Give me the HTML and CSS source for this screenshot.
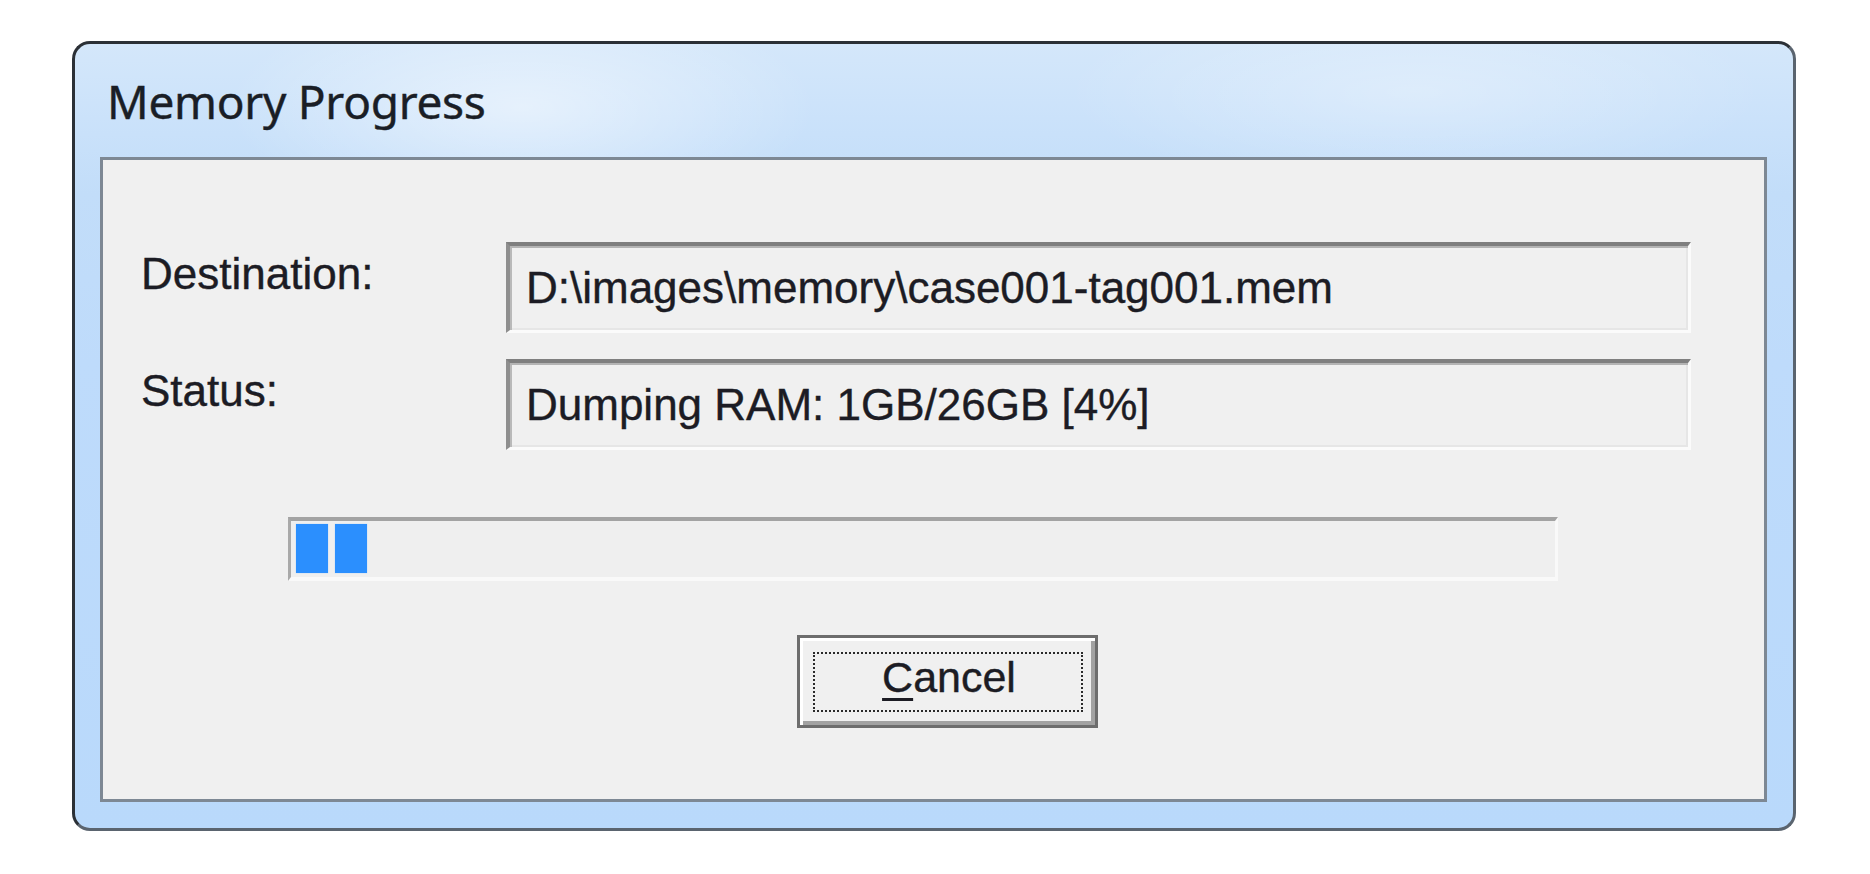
FILE: index.html
```html
<!DOCTYPE html>
<html lang="en">
<head>
<meta charset="utf-8">
<title>Memory Progress</title>
<link rel="stylesheet" href="styles.css">
</head>
<body>
<div class="window">
  <div class="titlebar"><span class="title">Memory Progress</span></div>
  <div class="panel">
    <div class="rows">
      <div class="row">
        <span class="label">Destination:</span>
        <div class="field">D:\images\memory\case001-tag001.mem</div>
      </div>
      <div class="row">
        <span class="label">Status:</span>
        <div class="field">Dumping RAM: 1GB/26GB [4%]</div>
      </div>
    </div>
    <div class="progress"><span class="chunk"></span><span class="chunk"></span></div>
    <button class="btn" type="button"><span class="focus"><span class="mnemonic">C</span>ancel</span></button>
  </div>
</div>
</body>
</html>
```

FILE: styles.css
```css
html, body {
  margin: 0;
  background: #ffffff;
}
body {
  padding: 41px 0 0 72px;
  font-family: "Liberation Sans", Arial, sans-serif;
  font-size: 44px;
  color: #1e1e1e;
}
.window {
  box-sizing: border-box;
  width: 1724px;
  height: 790px;
  border: 3px solid;
  border-color: #2b3036 #5a646f #5a646f #2b3036;
  border-radius: 18px;
  padding: 0 26px 26px 25px;
  display: flex;
  flex-direction: column;
  background:
    radial-gradient(ellipse 420px 160px at 26% 8%, rgba(255,255,255,0.5), rgba(255,255,255,0) 70%),
    radial-gradient(ellipse 500px 140px at 78% 6%, rgba(255,255,255,0.3), rgba(255,255,255,0) 70%),
    linear-gradient(180deg, #d4e7fa 0, #c9e1fa 90px, #c2ddf9 150px, #bedbfb 320px, #b9d9fb 100%);
}
.titlebar {
  height: 113px;
  flex: none;
  padding: 27px 0 0 7px;
  box-sizing: border-box;
}
.title {
  font-family: "Noto Sans", "Open Sans", sans-serif;
  font-size: 46px;
  line-height: 60px;
  color: #1a1e26;
  letter-spacing: -0.3px;
  -webkit-text-stroke: 0.4px #1a1e26;
}
.panel {
  flex: 1;
  background: #f0f0f0;
  border: 3px solid #7d8894;
  padding: 82px 73px 0 38px;
  display: flex;
  flex-direction: column;
  align-items: flex-start;
}
.rows {
  width: 100%;
  display: flex;
  flex-direction: column;
  gap: 26px;
}
.row {
  display: flex;
  height: 91px;
}
.label {
  width: 365px;
  flex: none;
  padding-top: 7px;
  line-height: 50px;
  color: #1c1c24;
  -webkit-text-stroke: 0.4px #1c1c24;
}
.field {
  flex: 1;
  box-sizing: border-box;
  height: 91px;
  border-style: solid;
  border-width: 4px 3px 3px 4px;
  border-color: #7f7f7f #fbfbfb #fbfbfb #8e8e8e;
  box-shadow: inset 0 2px 0 #b4b4b4, inset 2px 0 0 #b9b9b9, inset -2px -2px 0 #e6e6e6;
  padding: 17px 0 0 16px;
  line-height: 50px;
  white-space: pre;
  color: #1c1c24;
  -webkit-text-stroke: 0.4px #1c1c24;
}
.progress {
  margin: 67px 0 0 147px;
  width: 1270px;
  height: 64px;
  box-sizing: border-box;
  border-style: solid;
  border-width: 4px 3px 4px 3px;
  border-color: #a3a3a3 #f9f9f9 #f9f9f9 #a9a9a9;
  padding: 3px 5px 4px 5px;
  display: flex;
  gap: 7px;
  background: #efefef;
}
.chunk {
  width: 32px;
  height: 100%;
  background: #2b8ffe;
  box-shadow: 0 0 1px #9cc8fb;
}
.btn {
  margin: 54px 0 0 656px;
  width: 301px;
  height: 93px;
  box-sizing: border-box;
  border: 3px solid #6d6d6d;
  border-radius: 0;
  background: #f0f0f0;
  box-shadow: inset 3px 3px 0 #ffffff, inset -4px -4px 0 #a2a2a2;
  padding: 14px 12px 13px 13px;
  display: flex;
  font-family: "Liberation Sans", Arial, sans-serif;
  font-size: 43px;
  color: #1c1c24;
  -webkit-text-stroke: 0.4px #1c1c24;
  appearance: none;
}
.focus {
  flex: 1;
  align-self: stretch;
  border: 2px dotted #2a2a2a;
  display: flex;
  justify-content: center;
  align-items: flex-start;
  line-height: 46px;
  padding-left: 2px;
}
.mnemonic {
  text-decoration: underline;
  text-decoration-thickness: 3px;
  text-underline-offset: 6px;
}
```
